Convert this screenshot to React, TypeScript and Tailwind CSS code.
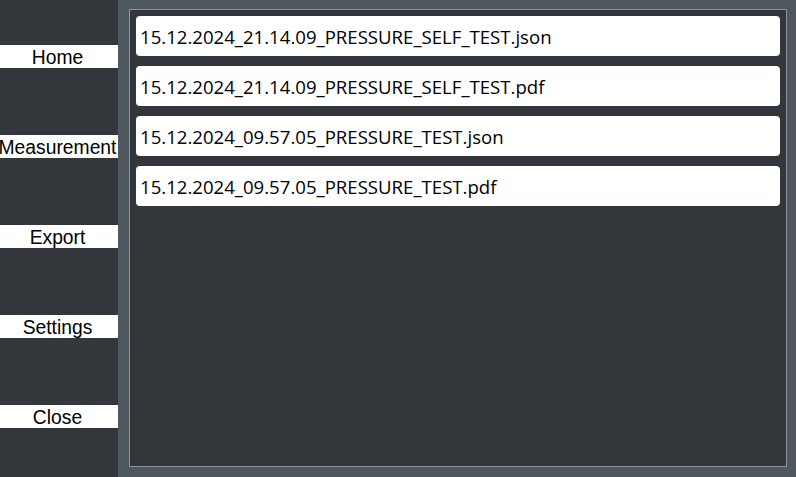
import React from 'react';

const navItems = ['Home', 'Measurement', 'Export', 'Settings', 'Close'];

const files = [
    '15.12.2024_21.14.09_PRESSURE_SELF_TEST.json',
    '15.12.2024_21.14.09_PRESSURE_SELF_TEST.pdf',
    '15.12.2024_09.57.05_PRESSURE_TEST.json',
    '15.12.2024_09.57.05_PRESSURE_TEST.pdf',
];

export default function App() {
    return (
        <div className="w-[796px] h-[477px] flex bg-[#50585f] overflow-hidden">
            {/* Sidebar */}
            <aside className="w-[118px] h-full bg-[#33373c] flex flex-col pt-[45px] gap-[67px] shrink-0">
                {navItems.map((label) => (
                    <button
                        key={label}
                        className="h-[23px] w-full bg-white text-black text-[19.3px] leading-[25px] flex justify-center pr-[3px] whitespace-nowrap overflow-visible font-['Liberation_Sans',Arial,sans-serif]"
                    >
                        {label}
                    </button>
                ))}
            </aside>

            {/* File list */}
            <main className="flex-1 pl-[11px] pr-[9px] pt-[9px] pb-[10px]">
                <div className="h-full border border-[#8e969d] bg-[#33373c] p-[6px] flex flex-col gap-[10px]">
                    {files.map((name) => (
                        <div
                            key={name}
                            className="h-[40px] bg-white rounded-[4px] flex items-center pl-[4px] pt-[1px] text-black text-[18.6px] font-['Open_Sans','Noto_Sans',sans-serif]"
                        >
                            {name}
                        </div>
                    ))}
                </div>
            </main>
        </div>
    );
}
